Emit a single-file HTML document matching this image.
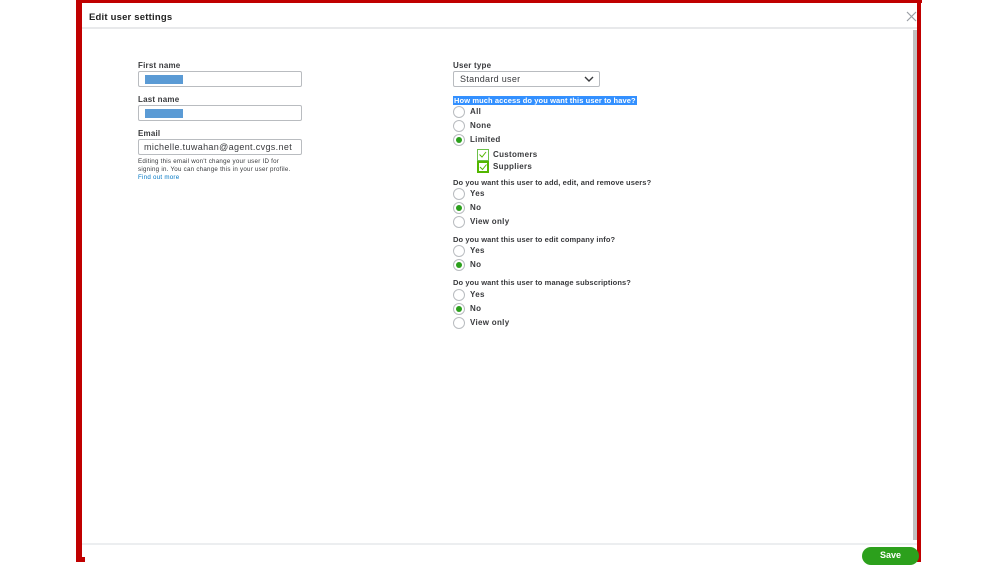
<!DOCTYPE html>
<html><head><meta charset="utf-8"><style>
*{margin:0;padding:0;box-sizing:border-box}
body{width:999px;height:562px;background:#fff;position:relative;overflow:hidden;font-family:"Liberation Sans",sans-serif;color:#393a3d}
.a{position:absolute;white-space:nowrap}
.lbl{font-size:8px;font-weight:bold;color:#393a3d;letter-spacing:0.2px}
.inp{border:1px solid #b9bcc0;border-radius:2px;background:#fff;height:16px}
.blue{background:#5b9bd5;height:9px;width:38px;position:absolute;left:6px;top:3px}
.rad{width:12px;height:12px;border:1px solid #b9bcc0;border-radius:50%;background:#fff}
.rad.on::after{content:"";position:absolute;left:2px;top:2px;width:6px;height:6px;border-radius:50%;background:#2ca01c}
.t{font-size:8px;color:#393a3d;font-weight:bold;letter-spacing:0.3px}
.q{font-size:7.5px;font-weight:bold;color:#393a3d;letter-spacing:0.1px}
.cb{width:12px;height:12px;border:1.5px solid #6cc04a;background:#fff}
</style></head><body>
<div class="a" style="left:76px;top:0;width:846px;height:3px;background:#c00000"></div>
<div class="a" style="left:76px;top:0;width:6px;height:562px;background:#c00000"></div>
<div class="a" style="left:76px;top:557px;width:9px;height:5px;background:#c00000"></div>
<div class="a" style="left:917px;top:0;width:4px;height:562px;background:#c00000"></div>
<div class="a" style="left:82px;top:27px;width:835px;height:2px;background:#e8e9eb"></div>
<div class="a" style="left:82px;top:543px;width:835px;height:2px;background:#eceef0"></div>
<div class="a" style="left:913px;top:30px;width:4px;height:510px;background:#c0c0c0"></div>
<div class="a" style="left:89px;top:12px;font-size:9.5px;font-weight:bold;color:#222;letter-spacing:0.2px">Edit user settings</div>
<svg class="a" style="left:906px;top:11px" width="11" height="11"><path d="M1 1L10 10M10 1L1 10" stroke="#9a9ea4" stroke-width="1.2"/></svg>

<div class="a lbl" style="left:138px;top:61px">First name</div>
<div class="a inp" style="left:138px;top:71px;width:164px"><div class="blue"></div></div>
<div class="a lbl" style="left:138px;top:95px">Last name</div>
<div class="a inp" style="left:138px;top:105px;width:164px"><div class="blue"></div></div>
<div class="a lbl" style="left:138px;top:129px">Email</div>
<div class="a inp" style="left:138px;top:139px;width:164px;font-size:9px;letter-spacing:0.35px;padding:2px 0 0 5px">michelle.tuwahan@agent.cvgs.net</div>
<div class="a" style="left:138px;top:158px;font-size:6.2px;letter-spacing:0.25px;line-height:8px;color:#393a3d">Editing this email won't change your user ID for<br>signing in. You can change this in your user profile.<br><span style="color:#0077c5">Find out more</span></div>

<div class="a lbl" style="left:453px;top:61px">User type</div>
<div class="a inp" style="left:453px;top:71px;width:147px;font-size:9px;letter-spacing:0.3px;padding:2px 0 0 6px;height:16px">Standard user</div>
<svg class="a" style="left:584px;top:76px" width="10" height="7"><path d="M1 1L5 5L9 1" stroke="#393a3d" stroke-width="1.4" fill="none"/></svg>
<div class="a q" style="left:453px;top:96px;background:#3390ff;color:#fff;padding:0 1px">How much access do you want this user to have?</div>

<div class="a rad" style="left:453px;top:106px"></div><div class="a t" style="left:470px;top:107px">All</div>
<div class="a rad" style="left:453px;top:120px"></div><div class="a t" style="left:470px;top:121px">None</div>
<div class="a rad on" style="left:453px;top:134px"></div><div class="a t" style="left:470px;top:135px">Limited</div>
<div class="a cb" style="left:477px;top:149px"><svg width="9" height="9" style="position:absolute;left:0;top:0"><path d="M1.5 4.5L4 7L8 2" stroke="#53b700" stroke-width="1" fill="none"/></svg></div><div class="a t" style="left:493px;top:150px">Customers</div>
<div class="a cb" style="left:477px;top:161px;border-width:2px;border-color:#53b700"><svg width="8" height="8" style="position:absolute;left:0;top:0"><path d="M1 4L3.5 6.5L7.5 1.5" stroke="#53b700" stroke-width="1" fill="none"/></svg></div><div class="a t" style="left:493px;top:162px">Suppliers</div>

<div class="a q" style="left:453px;top:178px">Do you want this user to add, edit, and remove users?</div>
<div class="a rad" style="left:453px;top:188px"></div><div class="a t" style="left:470px;top:189px">Yes</div>
<div class="a rad on" style="left:453px;top:202px"></div><div class="a t" style="left:470px;top:203px">No</div>
<div class="a rad" style="left:453px;top:216px"></div><div class="a t" style="left:470px;top:217px">View only</div>

<div class="a q" style="left:453px;top:235px">Do you want this user to edit company info?</div>
<div class="a rad" style="left:453px;top:245px"></div><div class="a t" style="left:470px;top:246px">Yes</div>
<div class="a rad on" style="left:453px;top:259px"></div><div class="a t" style="left:470px;top:260px">No</div>

<div class="a q" style="left:453px;top:278px">Do you want this user to manage subscriptions?</div>
<div class="a rad" style="left:453px;top:289px"></div><div class="a t" style="left:470px;top:290px">Yes</div>
<div class="a rad on" style="left:453px;top:303px"></div><div class="a t" style="left:470px;top:304px">No</div>
<div class="a rad" style="left:453px;top:317px"></div><div class="a t" style="left:470px;top:318px">View only</div>

<div class="a" style="left:862px;top:547px;width:57px;height:18px;border-radius:9px;background:#2ca01c;color:#fff;font-size:9px;font-weight:bold;text-align:center;padding-top:3px">Save</div>
</body></html>
